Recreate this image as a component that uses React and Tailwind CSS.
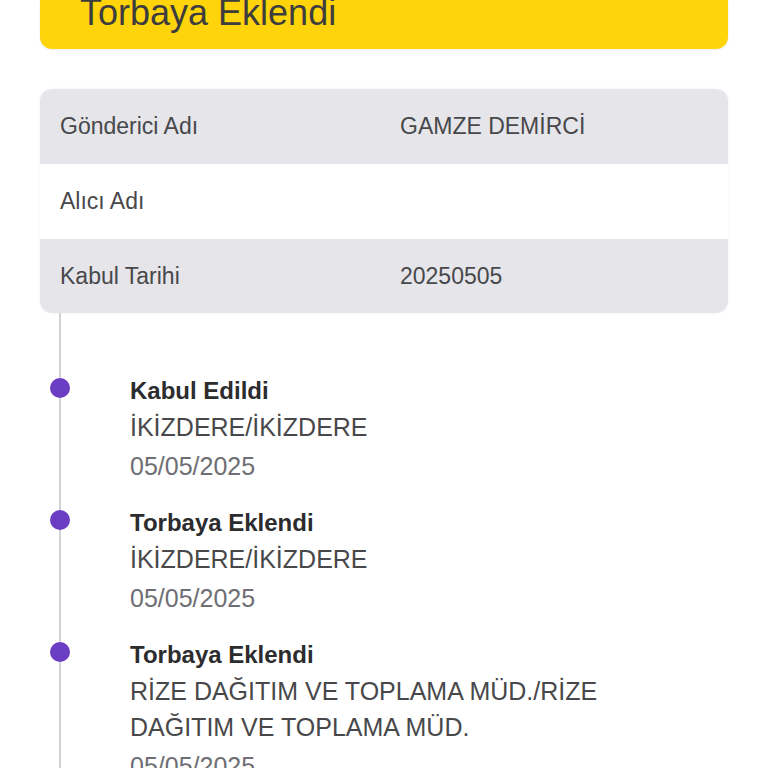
import React from "react";

const rows = [
  { label: "Gönderici Adı", value: "GAMZE DEMİRCİ", gray: true, h: "h-[75px]" },
  { label: "Alıcı Adı", value: "", gray: false, h: "h-[75px]" },
  { label: "Kabul Tarihi", value: "20250505", gray: true, h: "h-[74px]" },
];

const events = [
  { title: "Kabul Edildi", lines: ["İKİZDERE/İKİZDERE"], date: "05/05/2025" },
  { title: "Torbaya Eklendi", lines: ["İKİZDERE/İKİZDERE"], date: "05/05/2025" },
  {
    title: "Torbaya Eklendi",
    lines: ["RİZE DAĞITIM VE TOPLAMA MÜD./RİZE DAĞITIM VE TOPLAMA MÜD."],
    date: "05/05/2025",
  },
];

export default function App() {
  return (
    <div className="w-[768px] h-[768px] overflow-hidden bg-white font-['Liberation_Sans',Arial,sans-serif]">
      <div className="px-[40px]">
        <div className="h-[49px] rounded-b-[12px] bg-[#ffd40b] shadow-[0_1px_3px_rgba(0,0,0,0.08)] flex items-end pl-[40px] pb-[18px]">
          <span className="text-[36px] leading-[36px] text-[#3d3d3d]">Torbaya Eklendi</span>
        </div>

        <div className="mt-[40px] rounded-[12px] overflow-hidden shadow-[0_0_3px_rgba(0,0,0,0.06)]">
          {rows.map((r, i) => (
            <div
              key={i}
              className={`${r.h} flex items-center text-[23px] text-[#48484a] ${r.gray ? "bg-[#e5e5ea]" : "bg-white"}`}
            >
              <div className="w-[360px] pl-[20px]">{r.label}</div>
              <div>{r.value}</div>
            </div>
          ))}
        </div>
      </div>

      <div className="ml-[59px] border-l-2 border-[#d1d1d6] pt-[60px] pl-[69px] pr-[60px] flex flex-col gap-[21px]">
        {events.map((e, i) => (
          <div key={i} className="relative">
            <div className="absolute left-[-80px] top-[5px] w-[20px] h-[20px] rounded-full bg-[#6a3dc3]" />
            <div className="text-[24px] leading-[36px] font-bold text-[#2c2c2e]">{e.title}</div>
            {e.lines.map((l, j) => (
              <div key={j} className="text-[25px] leading-[36px] text-[#48484a]">{l}</div>
            ))}
            <div className="mt-[3px] text-[25px] leading-[36px] text-[#6e6e73]">{e.date}</div>
          </div>
        ))}
      </div>
    </div>
  );
}
